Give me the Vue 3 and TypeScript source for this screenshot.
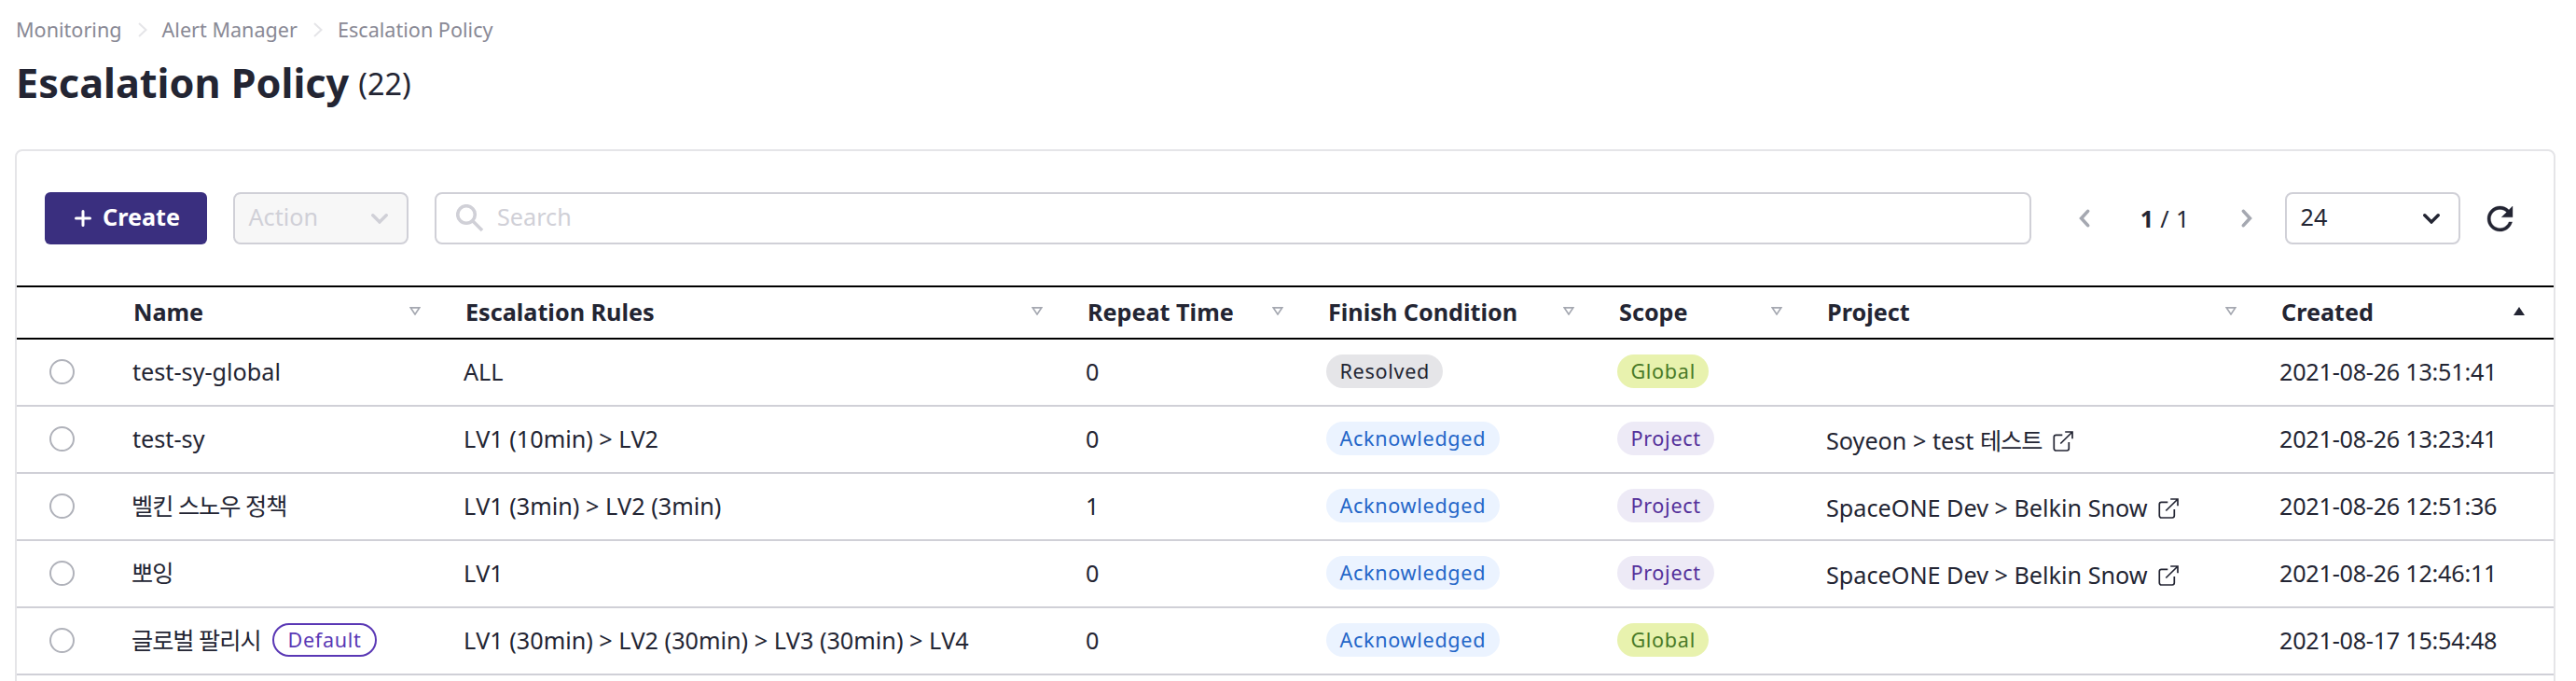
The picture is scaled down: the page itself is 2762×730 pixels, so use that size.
<script setup lang="ts">
interface Column {
  label: string
  sort: 'none' | 'asc'
}

interface Policy {
  name: string
  isDefault?: boolean
  rules: string
  repeat: number
  finish: 'Resolved' | 'Acknowledged'
  scope: 'Global' | 'Project'
  project?: string
  created: string
}

interface TextRun {
  text: string
  hangul: boolean
}

const breadcrumbs: string[] = ['Monitoring', 'Alert Manager', 'Escalation Policy']

const columns: Column[] = [
  { label: 'Name', sort: 'none' },
  { label: 'Escalation Rules', sort: 'none' },
  { label: 'Repeat Time', sort: 'none' },
  { label: 'Finish Condition', sort: 'none' },
  { label: 'Scope', sort: 'none' },
  { label: 'Project', sort: 'none' },
  { label: 'Created', sort: 'asc' },
]

const policies: Policy[] = [
  { name: 'test-sy-global', rules: 'ALL', repeat: 0, finish: 'Resolved', scope: 'Global', created: '2021-08-26 13:51:41' },
  { name: 'test-sy', rules: 'LV1 (10min) > LV2', repeat: 0, finish: 'Acknowledged', scope: 'Project', project: 'Soyeon > test 테스트', created: '2021-08-26 13:23:41' },
  { name: '벨킨 스노우 정책', rules: 'LV1 (3min) > LV2 (3min)', repeat: 1, finish: 'Acknowledged', scope: 'Project', project: 'SpaceONE Dev > Belkin Snow', created: '2021-08-26 12:51:36' },
  { name: '뽀잉', rules: 'LV1', repeat: 0, finish: 'Acknowledged', scope: 'Project', project: 'SpaceONE Dev > Belkin Snow', created: '2021-08-26 12:46:11' },
  { name: '글로벌 팔리시', isDefault: true, rules: 'LV1 (30min) > LV2 (30min) > LV3 (30min) > LV4', repeat: 0, finish: 'Acknowledged', scope: 'Global', created: '2021-08-17 15:54:48' },
]

// Hangul is tracked a little tighter than Latin text, so mixed strings are split into runs.
function toRuns(text: string): TextRun[] {
  return text
    .split(/([가-힣]+(?: [가-힣]+)*)/)
    .filter((part) => part.length > 0)
    .map((part) => ({ text: part, hangul: /[가-힣]/.test(part) }))
}
</script>

<template>
  <main class="page">
    <nav class="breadcrumb">
      <template v-for="(crumb, i) in breadcrumbs" :key="crumb">
        <svg v-if="i > 0" class="crumb-sep" viewBox="0 0 10 16"><path d="M1 1l7.5 7L1 15" /></svg>
        <span>{{ crumb }}</span>
      </template>
    </nav>

    <header class="heading">
      <h1>Escalation Policy</h1>
      <span class="count">(22)</span>
    </header>

    <section class="card">
      <div class="toolbar">
        <button class="create" type="button">
          <svg class="plus" viewBox="0 0 18 18"><path d="M9 1.5v15M1.5 9h15" /></svg>
          <span class="control-text">Create</span>
        </button>
        <div class="select action">
          <span class="control-text">Action</span>
          <svg class="chevron" viewBox="0 0 18 11"><path d="M1.8 1.8L9 9l7.2-7.2" /></svg>
        </div>
        <div class="search">
          <svg class="magnifier" viewBox="0 0 30 30"><circle cx="11" cy="11" r="9.3" /><path d="M18 18l10 10" /></svg>
          <span class="control-text">Search</span>
        </div>
        <div class="pager">
          <svg class="arrow" viewBox="0 0 12 20"><path d="M9.6 2.4L2.6 10l7 7.6" /></svg>
          <span class="pages"><b>1</b> / 1</span>
          <svg class="arrow" viewBox="0 0 12 20"><path d="M2.4 2.4l7 7.6-7 7.6" /></svg>
        </div>
        <div class="select size">
          <span class="control-text">24</span>
          <svg class="chevron" viewBox="0 0 18 11"><path d="M1.8 1.8L9 9l7.2-7.2" /></svg>
        </div>
        <svg class="refresh" viewBox="4 4 16 16"><path d="M17.65 6.35C16.2 4.9 14.21 4 12 4c-4.42 0-7.99 3.58-7.99 8s3.57 8 7.99 8c3.73 0 6.84-2.55 7.73-6h-2.08c-.82 2.33-3.04 4-5.65 4-3.31 0-6-2.69-6-6s2.69-6 6-6c1.66 0 3.14.69 4.22 1.78L13 11h7V4l-2.35 2.35z" /></svg>
      </div>

      <div class="row head-row">
        <div class="cell"></div>
        <div v-for="col in columns" :key="col.label" class="cell th">
          <span>{{ col.label }}</span>
          <svg class="sort" :class="col.sort" viewBox="0 0 12 9">
            <path v-if="col.sort === 'none'" d="M1.3 0.9h9.4L6 7.9z" />
            <path v-else d="M6 0l6 9H0z" />
          </svg>
        </div>
      </div>

      <div v-for="policy in policies" :key="policy.name" class="row body-row">
        <div class="cell radio-cell"><i class="radio"></i></div>
        <div class="cell name">
          <span><span v-for="run in toRuns(policy.name)" :key="run.text" :class="{ hangul: run.hangul }">{{ run.text }}</span></span>
          <span v-if="policy.isDefault" class="badge outline">Default</span>
        </div>
        <div class="cell rules"><span>{{ policy.rules }}</span></div>
        <div class="cell"><span>{{ policy.repeat }}</span></div>
        <div class="cell"><span class="badge" :class="policy.finish.toLowerCase()">{{ policy.finish }}</span></div>
        <div class="cell"><span class="badge" :class="policy.scope.toLowerCase()">{{ policy.scope }}</span></div>
        <div class="cell link">
          <template v-if="policy.project">
            <span><span v-for="run in toRuns(policy.project)" :key="run.text" :class="{ hangul: run.hangul }">{{ run.text }}</span></span>
            <svg class="external" viewBox="0 0 22 22"><path d="M10.3 4.3H3.5a2.2 2.2 0 0 0-2.2 2.2v12.3A2.2 2.2 0 0 0 3.5 21h11.6a2.2 2.2 0 0 0 2.2-2.2V12M13.2 1H21v7.3M21 1L8.3 13.5" /></svg>
          </template>
        </div>
        <div class="cell created"><span>{{ policy.created }}</span></div>
      </div>
    </section>
  </main>
</template>

<style>
body {
  background: #fff;
}
</style>

<style scoped>
.page {
  box-sizing: border-box;
  width: 2762px;
  height: 730px;
  padding: 16px 22px 0 16px;
  overflow: hidden;
  display: flex;
  flex-direction: column;
  color: #232533;
  font-family: "Noto Sans", "Noto Sans CJK KR", sans-serif;
  font-size: 25.2px;
  line-height: 36px;
}

.breadcrumb {
  display: flex;
  align-items: center;
  height: 32px;
  padding-left: 1px;
  color: #898995;
  font-size: 21.6px;
  line-height: 32px;
}

.crumb-sep {
  width: 10px;
  height: 16px;
  margin: 0 16px 0 17px;
  fill: none;
  stroke: #e5e5e8;
  stroke-width: 2;
}

.heading {
  display: flex;
  align-items: center;
  gap: 10px;
  height: 60px;
  margin-top: 11px;
  padding-left: 1px;
  white-space: nowrap;
}

h1 {
  margin: 0;
  font-size: 43.2px;
  line-height: 60px;
  font-weight: 700;
}

.count {
  font-size: 32.4px;
  line-height: 60px;
}

.card {
  flex: none;
  box-sizing: border-box;
  height: 700px;
  margin-top: 41px;
  border: 2px solid #e5e5e8;
  border-radius: 8px;
}

.toolbar {
  display: flex;
  align-items: center;
  height: 144px;
  padding: 0 44px 0 30px;
}

.create {
  display: flex;
  align-items: center;
  gap: 12px;
  box-sizing: border-box;
  width: 174px;
  height: 56px;
  margin: 0;
  padding: 0 0 0 32px;
  border: 0;
  border-radius: 6px;
  background: #3a2f7f;
  color: #fff;
  font: inherit;
  font-weight: 700;
}

.control-text {
  padding-bottom: 4px;
}

.plus {
  width: 18px;
  height: 18px;
  stroke: #fff;
  stroke-width: 3;
  stroke-linecap: round;
}

.select,
.search {
  display: flex;
  align-items: center;
  box-sizing: border-box;
  height: 56px;
  border: 2px solid #d0d0d7;
  border-radius: 8px;
}

.select {
  justify-content: space-between;
  width: 188px;
  padding: 0 20px 0 14.5px;
}

.action {
  margin-left: 28px;
  background: #f7f7f7;
  color: #d0d0d7;
}

.chevron {
  width: 18px;
  height: 11px;
  fill: none;
  stroke: currentColor;
  stroke-width: 3.4;
  stroke-linecap: round;
}

.search {
  flex: 1;
  gap: 14px;
  margin-left: 28px;
  padding-left: 21px;
  color: #d0d0d7;
}

.magnifier {
  width: 30px;
  height: 30px;
  fill: none;
  stroke: #d0d0d7;
  stroke-width: 3.6;
}

.pager {
  display: flex;
  align-items: center;
  justify-content: space-between;
  width: 186px;
  margin-left: 51px;
}

.pages {
  padding-right: 2px;
  word-spacing: 0.7px;
}

.arrow {
  width: 12px;
  height: 20px;
  fill: none;
  stroke: #a5a8b1;
  stroke-width: 3.6;
  stroke-linecap: round;
}

.size {
  margin-left: 35px;
}

.refresh {
  width: 27px;
  height: 27px;
  margin-left: 29px;
  overflow: visible;
  fill: #232533;
  stroke: #232533;
  stroke-width: 0.2;
}

.row {
  display: grid;
  grid-template-columns: 108px 355px 667px 258px 312px 223px 487px 310px;
  box-sizing: border-box;
}

.head-row {
  height: 58px;
  border-top: 2px solid #000;
  border-bottom: 2px solid #000;
  font-weight: 700;
}

.body-row {
  height: 72px;
  border-bottom: 2px solid #d0d0d7;
}

.cell {
  display: flex;
  align-items: center;
  padding: 0 0 2px 16px;
  white-space: nowrap;
}

.th {
  justify-content: space-between;
  padding-left: 18px;
  padding-right: 30px;
}

.th:nth-child(2) {
  padding-left: 17px;
}

.th:last-child {
  padding-right: 31px;
}

.sort {
  width: 12px;
  height: 9px;
  margin-bottom: 2px;
  fill: none;
  stroke: #a5a8b1;
  stroke-width: 1.7;
}

.asc {
  fill: #232533;
  stroke: none;
}

.radio-cell {
  padding-left: 34.5px;
}

.radio {
  box-sizing: border-box;
  width: 27px;
  height: 27px;
  border: 2px solid #b0b2ba;
  border-radius: 50%;
}

.hangul {
  letter-spacing: -1px;
}

.name .hangul {
  margin-left: -1px;
}

.rules {
  font-kerning: none;
}

.created {
  letter-spacing: -0.25px;
}

.badge {
  box-sizing: border-box;
  height: 36px;
  padding: 0 14.4px;
  border-radius: 18px;
  font-size: 21.6px;
  line-height: 36px;
  letter-spacing: 0.7px;
}

.outline {
  margin-left: 12.5px;
  border: 2px solid #5a38b5;
  color: #5a38b5;
  line-height: 32px;
}

.resolved {
  background: #e5e5e8;
}

.acknowledged {
  background: #ebf3ff;
  color: #2466c8;
}

.global {
  background: #e8f2ae;
  color: #4a7a28;
}

.project {
  background: #edeaf6;
  color: #54309a;
}

.link {
  padding-top: 2px;
  padding-bottom: 0;
  padding-left: 17px;
}

.external {
  width: 22px;
  height: 22px;
  margin: 2px 0 0 11.5px;
  fill: none;
  stroke: #232533;
  stroke-width: 1.7;
}
</style>
